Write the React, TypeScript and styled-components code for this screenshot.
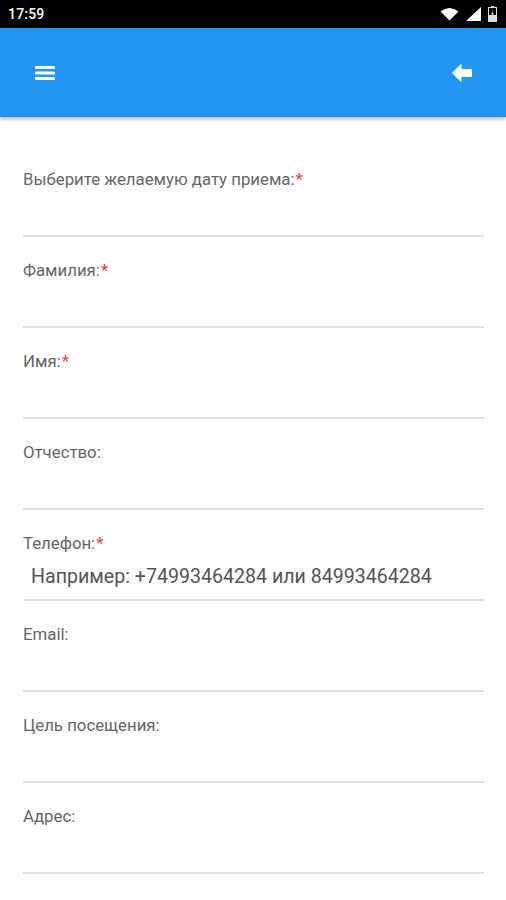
import React from "react";
import styled, { createGlobalStyle } from "styled-components";

const Global = createGlobalStyle`
  html, body { margin: 0; padding: 0; background: #fff; }
  body { width: 506px; height: 900px; overflow: hidden; font-family: Roboto, "Noto Sans", sans-serif; }
  * { box-sizing: border-box; }
`;

const Screen = styled.div`
  width: 506px;
  height: 900px;
  display: flex;
  flex-direction: column;
  background: #fff;
`;

const StatusBar = styled.div`
  height: 28px;
  background: #000;
  display: flex;
  align-items: center;
  justify-content: space-between;
  padding: 0 9px 0 8px;
  color: #fff;
`;

const Time = styled.span`
  font-size: 14px;
  font-weight: 500;
  letter-spacing: 0.2px;
`;

const StatusIcons = styled.div`
  display: flex;
  align-items: center;
  gap: 7px;
`;

const AppBar = styled.header`
  height: 89px;
  background: #2196f3;
  display: flex;
  align-items: center;
  justify-content: space-between;
  padding: 0 34px 0 35px;
  box-shadow: 0 2px 4px rgba(0, 0, 0, 0.28);
  position: relative;
  z-index: 1;
`;

const IconButton = styled.div`
  display: flex;
  align-items: center;
  justify-content: center;
`;

const Form = styled.div`
  display: flex;
  flex-direction: column;
  padding: 52px 22px 0 23px;
`;

const Field = styled.div`
  display: flex;
  flex-direction: column;
  margin-bottom: 23px;
`;

const Label = styled.label`
  font-size: 16.8px;
  line-height: 20px;
  color: #666;
`;

const Required = styled.span`
  color: #f44336;
  margin-left: 1px;
`;

const Input = styled.div`
  height: 48px;
  border-bottom: 2px solid #e2e2e2;
  display: flex;
  align-items: center;
  padding-left: 8px;
  font-size: 19.6px;
  color: #555;
`;

const fields: { label: string; required?: boolean; placeholder?: string }[] = [
  { label: "Выберите желаемую дату приема:", required: true },
  { label: "Фамилия:", required: true },
  { label: "Имя:", required: true },
  { label: "Отчество:" },
  { label: "Телефон:", required: true, placeholder: "Например: +74993464284 или 84993464284" },
  { label: "Email:" },
  { label: "Цель посещения:" },
  { label: "Адрес:" },
];

export default function App() {
  return (
    <Screen>
      <Global />
      <StatusBar>
        <Time>17:59</Time>
        <StatusIcons>
          <svg width="19" height="14" viewBox="0 0 19 14">
            <path d="M0.5 4.5 Q9.5 -2.5 18.5 4.5 L9.5 13.5 Z" fill="#fff" />
          </svg>
          <svg width="15" height="14" viewBox="0 0 15 14">
            <path d="M15 0 L15 14 L0 14 Z" fill="#fff" />
          </svg>
          <svg width="9" height="16" viewBox="0 0 9 16">
            <rect x="3" y="0" width="3" height="2" fill="#ddd" />
            <rect x="0.5" y="1.5" width="8" height="14" fill="none" stroke="#ddd" strokeWidth="1" />
            <rect x="1" y="9" width="7" height="6" fill="#ddd" />
            <path d="M5 4 L3 8.5 L4.6 8.5 L3.8 12 L6 7.5 L4.5 7.5 Z" fill="#ddd" />
          </svg>
        </StatusIcons>
      </StatusBar>
      <AppBar>
        <IconButton>
          <svg width="20" height="16" viewBox="0 0 20 16">
            <rect x="0" y="1" width="20" height="3" rx="1.2" fill="#fff" />
            <rect x="0" y="6.5" width="20" height="3" rx="1.2" fill="#fff" />
            <rect x="0" y="12" width="20" height="3" rx="1.2" fill="#fff" />
          </svg>
        </IconButton>
        <IconButton>
          <svg width="20" height="18" viewBox="0 0 20 18">
            <path d="M0.5 9 L9 0.5 L9 5.5 L19.5 5.5 L19.5 12.5 L9 12.5 L9 17.5 Z" fill="#fff" strokeLinejoin="round" stroke="#fff" strokeWidth="1" />
          </svg>
        </IconButton>
      </AppBar>
      <Form>
        {fields.map((f) => (
          <Field key={f.label}>
            <Label>
              {f.label}
              {f.required && <Required>*</Required>}
            </Label>
            <Input>{f.placeholder}</Input>
          </Field>
        ))}
      </Form>
    </Screen>
  );
}
